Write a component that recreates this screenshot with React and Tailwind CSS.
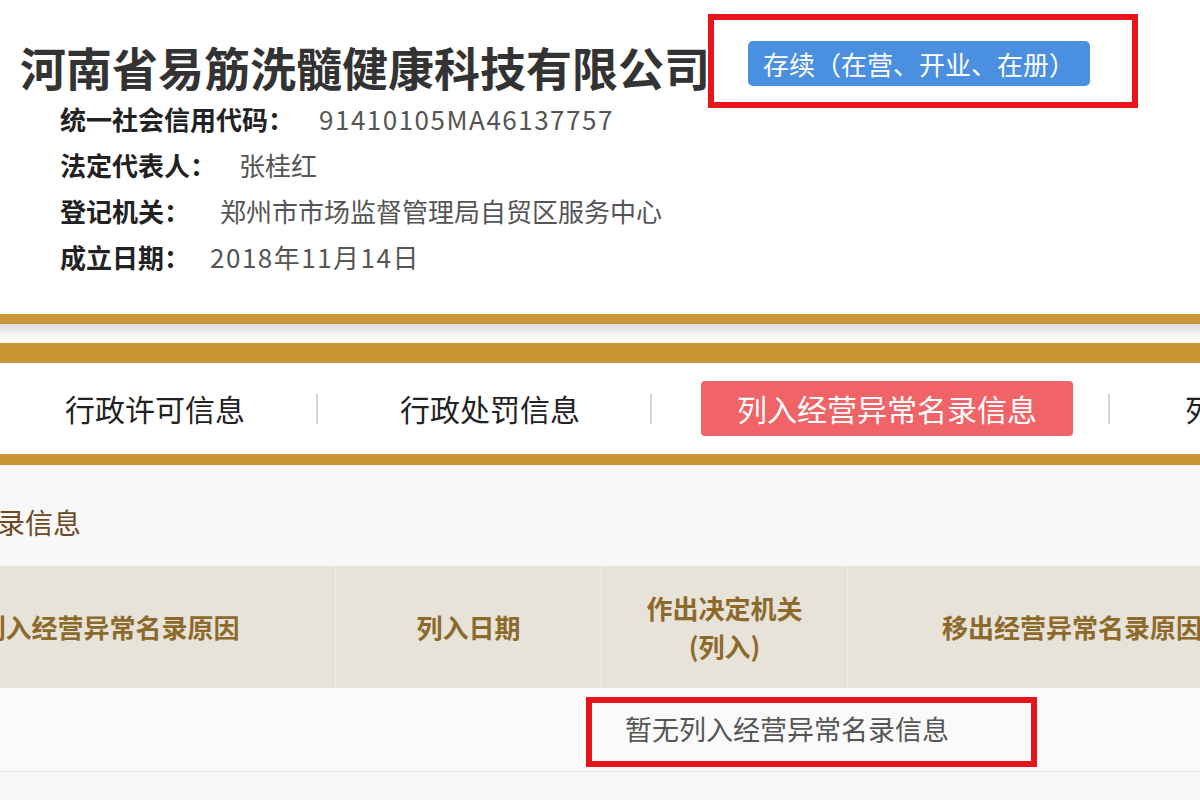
import React from 'react'

const FONT = { fontFamily: '"Noto Sans CJK SC", "Noto Sans", sans-serif' }

const infoRows = [
  { label: '统一社会信用代码：', value: '91410105MA46137757', gap: 'ml-[25px]', num: true },
  { label: '法定代表人：', value: '张桂红', gap: 'ml-[23px]' },
  { label: '登记机关：', value: '郑州市市场监督管理局自贸区服务中心', gap: 'ml-[30px]' },
  { label: '成立日期：', value: '2018年11月14日', gap: 'ml-[20px]', num: true },
]

const Divider = ({ className }) => (
  <div className={`w-[2px] h-[30px] bg-[#d4d4d4] shrink-0 ${className}`} />
)

export default function App() {
  return (
    <div className="relative w-[1200px] h-[800px] overflow-hidden bg-[#f8f8f8]" style={FONT}>
      {/* company header */}
      <div className="h-[314px] bg-white pt-[40px]">
        <div className="flex items-center h-[52px] pl-[20px]">
          <h1 className="text-[46px] leading-[52px] font-bold text-[#333] whitespace-nowrap">
            河南省易筋洗髓健康科技有限公司
          </h1>
          <div className="relative ml-[38px] -mt-[5px]">
            <span className="block bg-[#4a8fe0] text-white text-[26px] leading-[45px] px-[15px] rounded-[5px] whitespace-nowrap">
              存续（在营、开业、在册）
            </span>
            <div className="absolute -left-[40px] -right-[48px] -top-[27px] -bottom-[22px] border-[6px] border-[#e8141c]" />
          </div>
        </div>
        <div className="mt-[3px] pl-[60px]">
          {infoRows.map((r) => (
            <div key={r.label} className="flex items-center h-[46px] text-[26px]">
              <span className="font-bold text-[#222]">{r.label}</span>
              <span className={`${r.gap} text-[#555] ${r.num ? 'tracking-[1.5px]' : ''}`}>{r.value}</span>
            </div>
          ))}
        </div>
      </div>

      {/* gold bands + tabs */}
      <div className="h-[10px] bg-[#c99535]" />
      <div className="h-[13px] bg-gradient-to-b from-[#dcdce4] to-[#fbf9f3]" />
      <div className="h-[6px] bg-[#fbf9f3]" />
      <div className="h-[20px] bg-[#c99535]" />
      <div className="h-[91px] bg-white flex items-center whitespace-nowrap text-[30px] text-[#222]">
        <span className="ml-[65px]">行政许可信息</span>
        <Divider className="ml-[71px]" />
        <span className="ml-[82px]">行政处罚信息</span>
        <Divider className="ml-[70px]" />
        <span className="ml-[49px] h-[55px] flex items-center px-[36px] bg-[#f06467] text-white rounded-[4px]">
          列入经营异常名录信息
        </span>
        <Divider className="ml-[35px]" />
        <span className="ml-[75px]">列入严重违法失信企业名单信息</span>
      </div>
      <div className="h-[11px] bg-[#c99535]" />

      {/* section */}
      <div className="pt-[40px] h-[101px]">
        <div className="ml-[-199px] text-[28px] leading-[34px] text-[#6b4a26] whitespace-nowrap">
          列入经营异常名录信息
        </div>
      </div>

      <div className="ml-[-116px] grid grid-cols-[452px_266px_246px_448px] h-[122px] bg-[#e8e3d9] text-[26px] font-bold text-[#8b6a2c] leading-[38px]">
        <div className="flex items-center justify-center border-r border-[#f3efe8]">列入经营异常名录原因</div>
        <div className="flex items-center justify-center border-r border-[#f3efe8]">列入日期</div>
        <div className="flex flex-col items-center justify-center border-r border-[#f3efe8]">
          <span>作出决定机关</span>
          <span>(列入)</span>
        </div>
        <div className="flex items-center justify-center whitespace-nowrap">移出经营异常名录原因</div>
      </div>

      <div className="relative h-[84px] bg-[#fafafa] border-b border-[#e6e6e6] flex items-center">
        <span className="ml-[625px] text-[27px] text-[#555] whitespace-nowrap">暂无列入经营异常名录信息</span>
        <div className="absolute left-[586px] top-[9px] w-[451px] h-[70px] border-[6px] border-[#e8141c]" />
      </div>
    </div>
  )
}
